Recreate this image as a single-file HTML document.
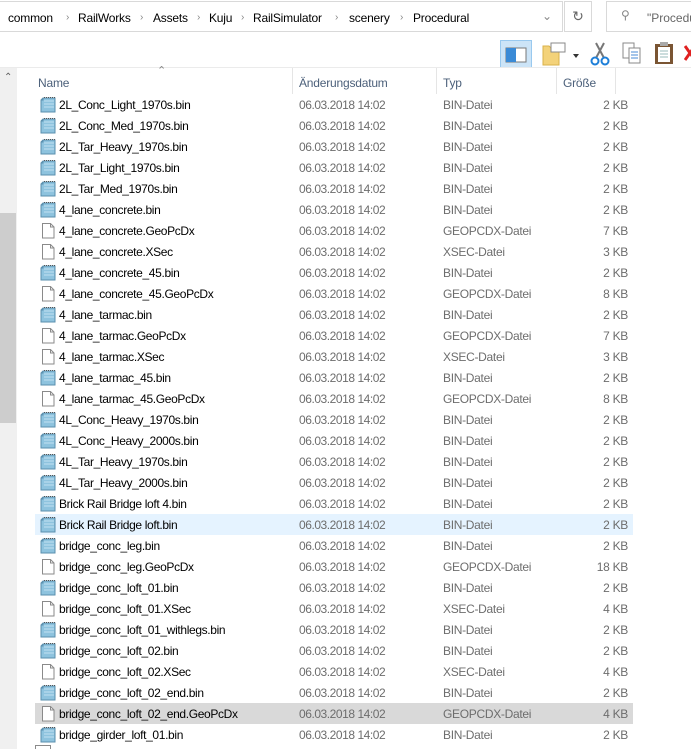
<!DOCTYPE html>
<html><head><meta charset="utf-8"><style>
*{margin:0;padding:0;box-sizing:border-box}
body{width:691px;height:749px;overflow:hidden;background:#fff;font-family:"Liberation Sans",sans-serif;font-size:12px;position:relative}
.addr{position:absolute;left:-2px;top:1px;width:565px;height:31px;border:1px solid #d9d9d9;}
.addr span{position:absolute;top:9px;color:#000;font-size:12px;letter-spacing:-0.2px}
.addr .ch{color:#888;font-size:10px;top:10px}
.ref{position:absolute;left:564px;top:1px;width:28px;height:31px;border:1px solid #d9d9d9;color:#666;text-align:center;line-height:29px;font-size:14px}
.search{position:absolute;left:606px;top:1px;width:90px;height:31px;border:1px solid #d9d9d9;color:#666;font-size:12px;padding:9px 0 0 40px}
.tbline{position:absolute;left:0;top:67px;width:691px;height:1px;background:#ebebeb}
.sb{position:absolute;left:0;top:68px;width:17px;height:681px;background:#f0f0f0}
.thumb{position:absolute;left:0;top:213px;width:16px;height:210px;background:#cdcdcd}
.hdr{position:absolute;top:76px;color:#4c607a;font-size:12px;letter-spacing:-0.2px}
.vl{position:absolute;top:68px;width:1px;height:26px;background:#e5e5e5}
.row{position:absolute;left:35px;width:598px;height:21px}
.row .n{position:absolute;left:24px;top:4px;color:#000;font-size:12px;letter-spacing:-0.35px;white-space:nowrap}
.row .d{position:absolute;left:264px;top:4px;color:#6d6d6d;font-size:12px;letter-spacing:-0.45px}
.row .t{position:absolute;left:408px;top:4px;color:#6d6d6d;font-size:12px;letter-spacing:-0.3px}
.row .s{position:absolute;right:5px;top:4px;color:#6d6d6d;font-size:12px;letter-spacing:-0.3px}
.row svg{position:absolute;left:5px;top:2px}
</style></head><body>
<div class="addr">
<span style="left:9px">common</span><span class="ch" style="left:67px">›</span>
<span style="left:79px">RailWorks</span><span class="ch" style="left:141px">›</span>
<span style="left:154px">Assets</span><span class="ch" style="left:198px">›</span>
<span style="left:210px">Kuju</span><span class="ch" style="left:242px">›</span>
<span style="left:254px">RailSimulator</span><span class="ch" style="left:336px">›</span>
<span style="left:350px">scenery</span><span class="ch" style="left:401px">›</span>
<span style="left:414px">Procedural</span>
<span class="ch" style="left:543px;font-size:12px;top:7px">⌄</span>
</div>
<div class="ref">↻</div>
<div class="search"><span style="position:absolute;left:14px;top:6px;color:#888">⚲</span>"Procedu</div>
<svg style="position:absolute;left:500px;top:40px" width="32" height="28"><rect x="0.5" y="0.5" width="31" height="27" fill="#cce4f7" stroke="#99c9ef"/><rect x="6" y="8" width="20" height="14" fill="#fff" stroke="#777"/><rect x="6" y="8" width="10" height="14" fill="#3a8ad6"/></svg>
<svg style="position:absolute;left:541px;top:42px" width="40" height="24"><path d="M2 4h6l2 2h8v17H2z" fill="#f3d27a" stroke="#d9b24a"/><rect x="10" y="1" width="14" height="9" fill="#fff" stroke="#888"/><path d="M32 12h6l-3 4z" fill="#333"/></svg>
<svg style="position:absolute;left:590px;top:41px" width="20" height="26"><path d="M6 2l8 15M14 2L6 17" stroke="#777" stroke-width="2"/><circle cx="5" cy="20" r="3.5" fill="none" stroke="#1e7fd8" stroke-width="2"/><circle cx="15" cy="20" r="3.5" fill="none" stroke="#1e7fd8" stroke-width="2"/></svg>
<svg style="position:absolute;left:622px;top:42px" width="20" height="24"><rect x="1" y="1" width="11" height="15" fill="#fff" stroke="#888"/><rect x="7" y="6" width="11" height="15" fill="#fff" stroke="#888"/><path d="M9 10h7M9 13h7M9 16h7" stroke="#4a8bd6"/></svg>
<svg style="position:absolute;left:654px;top:41px" width="20" height="24"><rect x="1" y="3" width="18" height="20" fill="#7a5533"/><rect x="4" y="6" width="12" height="15" fill="#fff"/><rect x="6" y="1" width="8" height="4" fill="#aaa"/><path d="M6 10h8M6 13h8M6 16h8" stroke="#9bb"/></svg>
<svg style="position:absolute;left:684px;top:44px" width="7" height="20"><path d="M1 2l10 14M11 2L1 16" stroke="#e02020" stroke-width="3"/></svg>
<div class="tbline"></div>
<div class="sb"><div style="position:absolute;left:4px;top:4px;color:#606060;font-size:10px">⌃</div><div class="thumb" style="top:145px"></div></div>
<div style="position:absolute;left:157px;top:64px;color:#888;font-size:11px">⌃</div>
<div class="hdr" style="left:38px">Name</div>
<div class="vl" style="left:292px"></div>
<div class="hdr" style="left:299px">Änderungsdatum</div>
<div class="vl" style="left:436px"></div>
<div class="hdr" style="left:443px">Typ</div>
<div class="vl" style="left:556px"></div>
<div class="hdr" style="left:563px">Größe</div>
<div class="vl" style="left:615px"></div>
<div id="rows"></div>
<svg width="0" height="0" style="position:absolute"><defs>
<symbol id="bin" viewBox="0 0 16 17"><path d="M3 2h12v14H1V4z" fill="#8ec3de" stroke="#5a8fae"/><path d="M3 2v2H1" fill="none" stroke="#5a8fae"/><path d="M4 5h10M4 8h10M4 11h10" stroke="#b7dcee" stroke-width="1.2"/><path d="M4 1.5h11" stroke="#555" stroke-dasharray="1 1"/></symbol>
<symbol id="doc" viewBox="0 0 16 17"><path d="M2.5 1.5h8l3.5 3.5v11h-11.5z" fill="#fff" stroke="#8a8a8a"/><path d="M10.5 1.5v3.5h3.5" fill="none" stroke="#8a8a8a"/></symbol>
</defs></svg>
<script>
var R=[["2L_Conc_Light_1970s.bin",0],["2L_Conc_Med_1970s.bin",0],["2L_Tar_Heavy_1970s.bin",0],["2L_Tar_Light_1970s.bin",0],["2L_Tar_Med_1970s.bin",0],["4_lane_concrete.bin",0],["4_lane_concrete.GeoPcDx",1,"7 KB"],["4_lane_concrete.XSec",2,"3 KB"],["4_lane_concrete_45.bin",0],["4_lane_concrete_45.GeoPcDx",1,"8 KB"],["4_lane_tarmac.bin",0],["4_lane_tarmac.GeoPcDx",1,"7 KB"],["4_lane_tarmac.XSec",2,"3 KB"],["4_lane_tarmac_45.bin",0],["4_lane_tarmac_45.GeoPcDx",1,"8 KB"],["4L_Conc_Heavy_1970s.bin",0],["4L_Conc_Heavy_2000s.bin",0],["4L_Tar_Heavy_1970s.bin",0],["4L_Tar_Heavy_2000s.bin",0],["Brick Rail Bridge loft 4.bin",0],["Brick Rail Bridge loft.bin",0],["bridge_conc_leg.bin",0],["bridge_conc_leg.GeoPcDx",1,"18 KB"],["bridge_conc_loft_01.bin",0],["bridge_conc_loft_01.XSec",2,"4 KB"],["bridge_conc_loft_01_withlegs.bin",0],["bridge_conc_loft_02.bin",0],["bridge_conc_loft_02.XSec",2,"4 KB"],["bridge_conc_loft_02_end.bin",0],["bridge_conc_loft_02_end.GeoPcDx",1,"4 KB"],["bridge_girder_loft_01.bin",0]];
var T=["BIN-Datei","GEOPCDX-Datei","XSEC-Datei"],h="";
R.forEach(function(r,i){var bg=i==20?"#e5f3ff":i==29?"#d9d9d9":"transparent";
h+='<div class="row" style="top:'+(94+21*i)+'px;background:'+bg+'"><svg width="16" height="17"><use href="#'+(r[1]?"doc":"bin")+'"/></svg><span class="n">'+r[0]+'</span><span class="d">06.03.2018 14:02</span><span class="t">'+T[r[1]]+'</span><span class="s">'+(r[2]||"2 KB")+'</span></div>';});
document.getElementById("rows").innerHTML=h;
</script>
<div style="position:absolute;left:35px;top:745px;width:16px;height:4px;border:1px solid #8a8a8a;border-bottom:none"></div>
</body></html>
